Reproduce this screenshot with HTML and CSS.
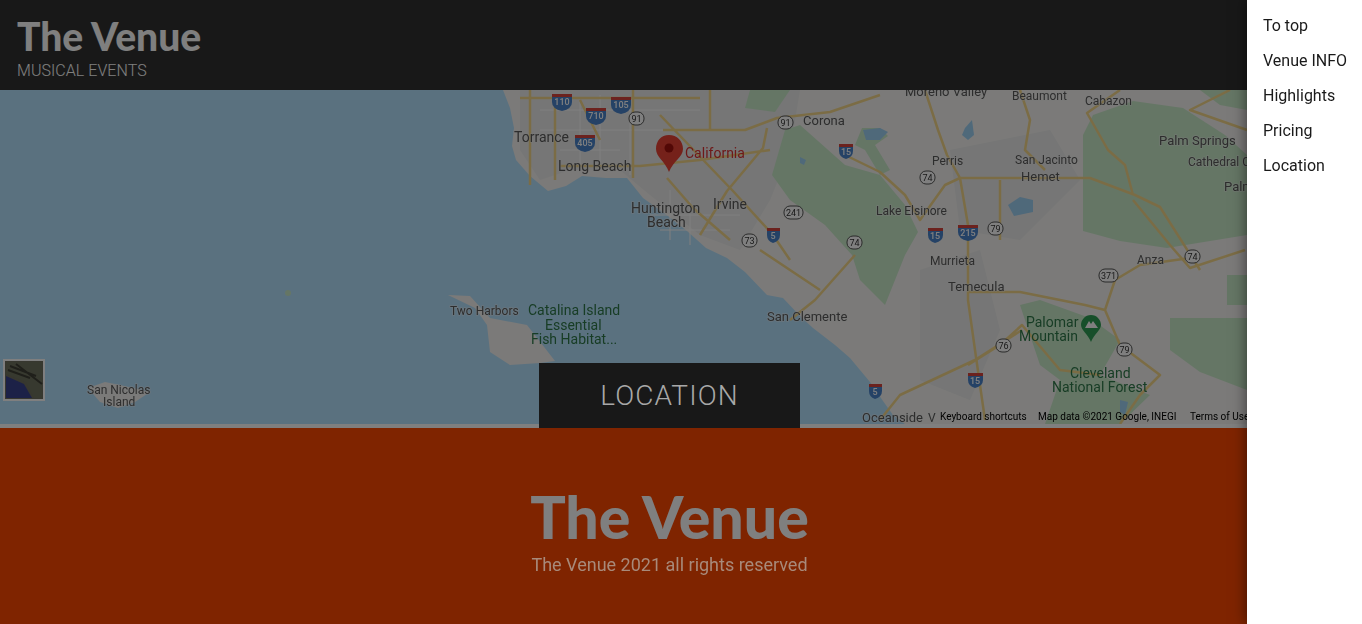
FILE: index.html
```html
<!DOCTYPE html>
<html lang="en">
<head>
<meta charset="utf-8">
<title>The Venue</title>
<link rel="stylesheet" href="styles.css">
</head>
<body>
<div class="page">
  <header class="top">
    <div class="logo">The Venue</div>
    <div class="tagline">MUSICAL EVENTS</div>
  </header>
  <section class="location">
    <svg class="map" viewBox="0 90 1339 334" width="1339" height="334" aria-label="Map of Southern California">
      <rect class="water" x="0" y="90" width="1339" height="334"/>
      <path class="land" d="M503 90L510 108 514 128 512 146 516 160 530 176 548 191 566 186 582 176 606 178 627 178 643 198 668 216 687 231 706 248 727 258 745 272 767 295 783 298 800 316 813 328 835 345 850 358 870 382 883 401 893 415 905 424 1339 424 1339 90Z"/>
      <path class="land" d="M448 295L470 296 490 318 527 325 555 361 540 363 510 365 490 352 487 325 475 308Z"/>
      <path class="land" d="M88 388L105 382 120 385 150 392 135 402 118 408 100 402Z"/>
      <path class="urban" d="M520 90H800L790 150 770 200 740 250 700 235 650 195 620 170 570 170 540 180 520 150Z"/>
      <path class="urban" d="M950 150L1050 130 1080 180 1020 240 960 230Z"/>
      <path class="urban" d="M920 270L980 250 1000 330 970 400 920 380Z"/>
      <path class="green" d="M785 130L800 125 845 165 880 175 905 205 918 232 905 255 885 305 860 280 852 255 825 225 790 200 772 175Z"/>
      <path class="green" d="M750 90H790L775 112 745 108Z"/>
      <path class="green" d="M1083 135L1093 115 1133 101 1183 108 1225 135 1247 155 1247 235 1167 248 1120 241 1083 231Z"/>
      <path class="green" d="M1170 318L1247 318 1247 390 1200 372 1170 350Z"/>
      <path class="green" d="M1227 275H1247V305H1227Z"/>
      <path class="green" d="M1020 305L1040 300 1090 318 1120 340 1100 375 1150 395 1120 424 1045 424 1060 380 1040 365Z"/>
      <path class="green" d="M1200 90H1247V110L1220 105Z"/>
      <path class="green" d="M862 128L880 128 888 136 875 145 890 170 880 175 865 150 855 145Z"/>
      <path class="lake" d="M863 130L880 128 888 132 880 140 866 140Z"/>
      <path class="lake" d="M965 128L972 120 974 135 968 140 962 135Z"/>
      <path class="lake" d="M1008 205L1020 197 1033 200 1033 212 1014 216Z"/>
      <path class="lake" d="M1120 400L1128 402 1125 415 1120 412Z"/>
      <path class="lake" d="M800 157L806 160 804 165 800 163Z"/>
      <circle class="green" cx="288" cy="293" r="3"/>
      <g class="mapgrid">
        <path d="M540 110H700M540 130H690M560 150H620M600 95V170M670 190V240M690 200L690 245M650 215L740 215M660 230H730M630 100V175M580 100V165"/>
      </g>
      <g class="roads">
        <path d="M520 98H700M530 90V185M555 100V180M560 166H640L700 160 770 150M633 90V178M710 90V130M663 130H745L777 118 830 112 880 95M660 115L733 191 773 235 790 260M767 128L763 148 727 191 700 235M667 178L693 208 730 240M580 100L600 140"/>
        <path d="M925 90L938 130 947 155 960 178 968 225 968 300 975 350 985 420M845 155L880 172 905 195 920 220 945 185 960 178H1090L1135 195 1160 207 1200 270M1000 180V240M1120 90L1087 113 1108 150 1125 165 1133 195M1133 200L1170 245 1190 268 1245 250M1020 90L1030 120 1025 150 1045 170"/>
        <path d="M968 292L1020 292 1085 305 1105 310 1120 345 1160 375 1140 395 1120 424M1105 310L1115 280 1140 265 1190 258M968 365L1000 345 1022 325 1060 370 1100 375M1022 330L975 360 900 395 880 420M855 255L815 300 790 320M760 250L820 290M1230 90L1190 110 1247 130"/>
      </g>
      <g class="labels">
        <text class="md" x="514" y="142">Torrance</text>
        <text class="md" x="558" y="171">Long Beach</text>
        <text class="md" x="631" y="213">Huntington</text>
        <text class="md" x="647" y="227">Beach</text>
        <text class="md" x="713" y="209">Irvine</text>
        <text x="803" y="125">Corona</text>
        <text x="905" y="96">Moreno Valley</text>
        <text class="sm" x="1012" y="100">Beaumont</text>
        <text class="sm" x="1085" y="105">Cabazon</text>
        <text x="1159" y="145">Palm Springs</text>
        <text class="sm" x="1188" y="166">Cathedral C</text>
        <text x="1224" y="191">Palm</text>
        <text class="sm" x="932" y="165">Perris</text>
        <text class="sm" x="1015" y="164">San Jacinto</text>
        <text x="1021" y="181">Hemet</text>
        <text class="sm" x="876" y="215">Lake Elsinore</text>
        <text class="sm" x="930" y="265">Murrieta</text>
        <text class="sm" x="1137" y="264">Anza</text>
        <text x="948" y="291">Temecula</text>
        <text x="767" y="321">San Clemente</text>
        <text x="862" y="422">Oceanside</text>
        <text class="sm" x="928" y="422">V</text>
        <text class="sm" x="450" y="315">Two Harbors</text>
        <text class="sm" x="87" y="394">San Nicolas</text>
        <text class="sm" x="103" y="406">Island</text>
        <text class="gtext" x="528" y="315">Catalina Island</text>
        <text class="gtext" x="545" y="330">Essential</text>
        <text class="gtext" x="531" y="344">Fish Habitat...</text>
        <text class="gtext" x="1026" y="327">Palomar</text>
        <text class="gtext" x="1019" y="341">Mountain</text>
        <text class="gtext" x="1070" y="378">Cleveland</text>
        <text class="gtext" x="1052" y="392">National Forest</text>
        <text class="red" x="685" y="158">California</text>
      </g>
      <g class="shield"><path class="i-blue" d="M552 94H572V102Q572 109 562 111 552 109 552 102Z"/><path class="i-red" d="M552 94H572V97H552Z"/><text x="562" y="105">110</text></g>
      <g class="shield"><path class="i-blue" d="M586 108H606V116Q606 123 596 125 586 123 586 116Z"/><path class="i-red" d="M586 108H606V111H586Z"/><text x="596" y="119">710</text></g>
      <g class="shield"><path class="i-blue" d="M611 97H631V105Q631 112 621 114 611 112 611 105Z"/><path class="i-red" d="M611 97H631V100H611Z"/><text x="621" y="108">105</text></g>
      <g class="shield"><path class="i-blue" d="M575 135H595V143Q595 150 585 152 575 150 575 143Z"/><path class="i-red" d="M575 135H595V138H575Z"/><text x="585" y="146">405</text></g>
      <g class="shield"><path class="i-blue" d="M839 144H853V151Q853 157 846 159 839 157 839 151Z"/><path class="i-red" d="M839 144H853V147H839Z"/><text x="846" y="155">15</text></g>
      <g class="shield"><path class="i-blue" d="M767 228H780V235Q780 241 773 243 767 241 767 235Z"/><path class="i-red" d="M767 228H780V231H767Z"/><text x="773" y="239">5</text></g>
      <g class="shield"><path class="i-blue" d="M928 228H943V235Q943 241 935 243 928 241 928 235Z"/><path class="i-red" d="M928 228H943V231H928Z"/><text x="935" y="239">15</text></g>
      <g class="shield"><path class="i-blue" d="M958 225H978V232Q978 239 968 241 958 239 958 232Z"/><path class="i-red" d="M958 225H978V228H958Z"/><text x="968" y="236">215</text></g>
      <g class="shield"><path class="i-blue" d="M968 373H983V380Q983 386 975 388 968 386 968 380Z"/><path class="i-red" d="M968 373H983V376H968Z"/><text x="975" y="384">15</text></g>
      <g class="shield"><path class="i-blue" d="M869 384H882V391Q882 397 875 399 869 397 869 391Z"/><path class="i-red" d="M869 384H882V387H869Z"/><text x="875" y="395">5</text></g>
      <g class="route"><rect x="629" y="112" width="15" height="13" rx="6"/><text x="636.500" y="122">91</text></g>
      <g class="route"><rect x="778" y="116" width="15" height="13" rx="6"/><text x="785.500" y="126">91</text></g>
      <g class="route"><rect x="784" y="206" width="19" height="13" rx="6"/><text x="793.500" y="216">241</text></g>
      <g class="route"><rect x="742" y="234" width="15" height="13" rx="6"/><text x="749.500" y="244">73</text></g>
      <g class="route"><rect x="847" y="236" width="15" height="13" rx="6"/><text x="854.500" y="246">74</text></g>
      <g class="route"><rect x="920" y="171" width="15" height="13" rx="6"/><text x="927.500" y="181">74</text></g>
      <g class="route"><rect x="988" y="222" width="15" height="13" rx="6"/><text x="995.500" y="232">79</text></g>
      <g class="route"><rect x="1185" y="250" width="15" height="13" rx="6"/><text x="1192.500" y="260">74</text></g>
      <g class="route"><rect x="1099" y="269" width="19" height="13" rx="6"/><text x="1108.500" y="279">371</text></g>
      <g class="route"><rect x="996" y="339" width="15" height="13" rx="6"/><text x="1003.500" y="349">76</text></g>
      <g class="route"><rect x="1117" y="343" width="15" height="13" rx="6"/><text x="1124.500" y="353">79</text></g>
      <path class="pin" d="M669 135C661 135 656 141 656 149 656 157 665 161 669 172 673 161 683 157 683 149 683 141 677 135 669 135Z"/>
      <circle class="pin-dot" cx="669" cy="148" r="4.500"/>
      <path class="park-pin" d="M1091 315C1085 315 1081 320 1081 325 1081 330 1088 334 1091 342 1094 334 1101 330 1101 325 1101 320 1097 315 1091 315Z"/>
      <path class="park-peak" d="M1085 328L1089 321 1091 324 1093 321 1098 328Z"/>
      <rect class="thumb" x="4" y="360" width="40" height="40"/>
      <path class="thumb-land" d="M6 362H42V398H34L26 382 6 374Z"/>
      <path class="thumb-ridge" d="M10 366L36 376M16 364L42 384M8 370L30 378"/>
      <path class="thumb-sea" d="M6 376L24 384 32 398H6Z"/>
      <g class="attrib">
        <text x="940" y="420">Keyboard shortcuts</text>
        <text x="1038" y="420">Map data ©2021 Google, INEGI</text>
        <text x="1190" y="420">Terms of Use</text>
      </g>
    </svg>
    <h2 class="location-title">LOCATION</h2>
  </section>
  <footer class="bottom">
    <div class="logo logo-large">The Venue</div>
    <p class="copy">The Venue 2021 all rights reserved</p>
  </footer>
</div>
<div class="scrim"></div>
<nav class="drawer">
  <a href="#">To top</a>
  <a href="#">Venue INFO</a>
  <a href="#">Highlights</a>
  <a href="#">Pricing</a>
  <a href="#">Location</a>
</nav>
</body>
</html>
```
FILE: styles.css
```css
* { box-sizing: border-box; }
html, body { height: 100%; }
body {
  margin: 0;
  overflow: hidden;
  background: #fff;
  font-family: Roboto, "Liberation Sans", sans-serif;
}
.page { width: 1339px; }

.top {
  height: 90px;
  padding: 16px 17px 0;
  background: #313131;
  color: #fff;
}
.logo {
  font-family: Lato, "Liberation Sans", sans-serif;
  font-weight: 900;
  font-size: 39px;
  line-height: 40px;
  color: #fff;
}
.tagline {
  margin-top: 5px;
  font-size: 16px;
  font-weight: 300;
  line-height: 19px;
  letter-spacing: .05px;
  color: #fff;
}

.location {
  position: relative;
  height: 338px;
  background: #fff;
}
.map { display: block; filter: blur(.35px); }
.location-title {
  position: absolute;
  z-index: 1;
  left: 539px;
  bottom: 0;
  width: 261px;
  height: 65px;
  margin: 0;
  background: #181818;
  color: #a8a8a8;
  font-size: 28px;
  font-weight: 300;
  line-height: 65px;
  letter-spacing: 1.1px;
  text-align: center;
}

.bottom {
  height: 196px;
  padding-top: 59px;
  background: #ff4800;
  text-align: center;
}
.logo-large {
  font-size: 59px;
  line-height: 60px;
}
.copy {
  position: relative;
  z-index: 1;
  margin: 6px 0 0;
  font-size: 18px;
  line-height: 24px;
  font-weight: 400;
  color: #a88a7a;
}

.scrim {
  position: fixed;
  inset: 0;
  background: rgba(0, 0, 0, .5);
}
.drawer {
  position: fixed;
  z-index: 2;
  top: 0;
  right: 0;
  bottom: 0;
  width: 115px;
  padding: 8px 0 0 16px;
  display: flex;
  flex-direction: column;
  background: #fff;
  box-shadow: 0 0 14px rgba(0, 0, 0, .55);
}
.drawer a {
  height: 35px;
  color: #1a1a1a;
  font-size: 16px;
  line-height: 35px;
  text-decoration: none;
  white-space: nowrap;
}

/* map */
.water { fill: #b5e2ff; }
.land { fill: #f6f5f2; }
.urban { fill: #ececec; }
.green { fill: #cbeccb; }
.lake { fill: #9fd2f5; }
.roads path { fill: none; stroke: #f6d98a; stroke-width: 2.5; stroke-linejoin: round; }
.mapgrid path { fill: none; stroke: #fff; stroke-width: 1; }
.labels text {
  font-size: 13px;
  fill: #5a5a5a;
  stroke: #f4f4f4;
  stroke-width: 1.5px;
  stroke-opacity: .5;
  paint-order: stroke;
}
.labels .sm { font-size: 12px; }
.labels .md { font-size: 14px; }
.labels .gtext { font-size: 14px; fill: #2f7a4a; stroke: none; }
.labels .red { fill: #d33; font-size: 14px; stroke: none; }
.shield text { font-size: 9px; fill: #fff; text-anchor: middle; font-weight: 500; }
.i-blue { fill: #4a84cc; }
.i-red { fill: #d9453d; }
.route rect { fill: #fff; stroke: #555; stroke-width: 1; }
.route text { font-size: 9px; fill: #333; text-anchor: middle; }
.pin { fill: #ea4335; }
.pin-dot { fill: #a5110c; }
.park-pin { fill: #2f9e55; }
.park-peak { fill: #fff; }
.thumb { fill: #6e6e5e; stroke: #fff; stroke-width: 2; }
.thumb-land { fill: #6f725e; }
.thumb-ridge { fill: none; stroke: #3e3e34; stroke-width: 2; }
.thumb-sea { fill: #39438e; }
.attrib text { font-size: 10px; fill: #000; }
```
